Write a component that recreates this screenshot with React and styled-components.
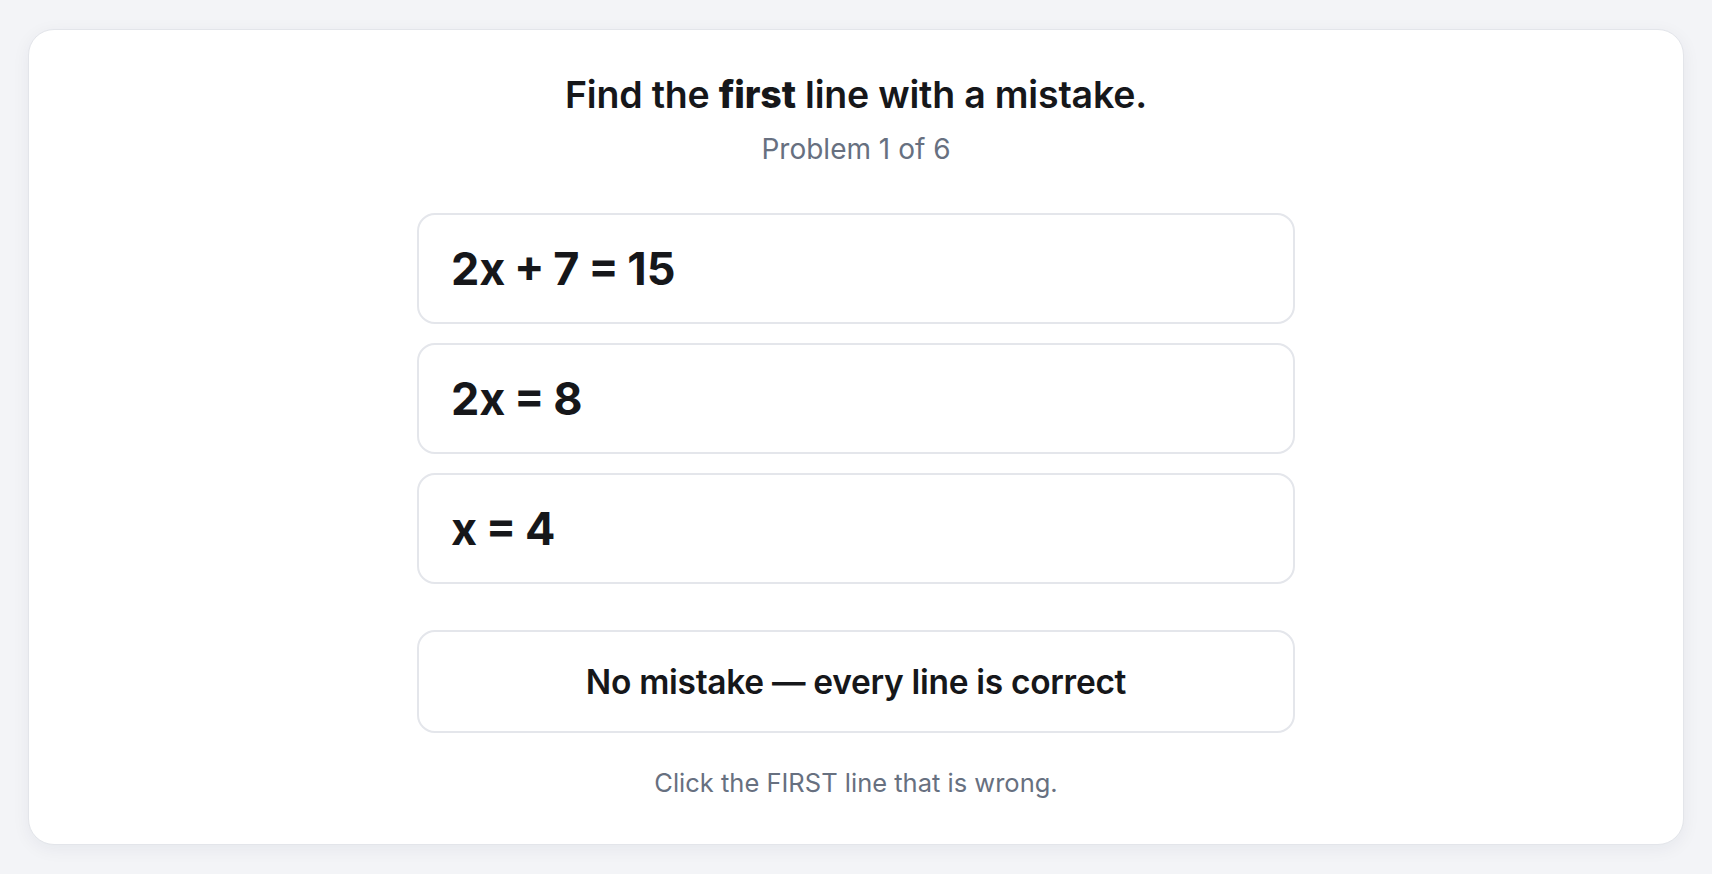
import React from 'react'
import styled, { createGlobalStyle } from 'styled-components'

const lines = ['2x + 7 = 15', '2x = 8', 'x = 4']

const GlobalStyle = createGlobalStyle`
  html, body {
    margin: 0;
    padding: 0;
    background: #f3f4f7;
  }
  body {
    font-family: Inter, "Noto Sans", "Liberation Sans", sans-serif;
    color: #16171a;
    -webkit-font-smoothing: antialiased;
  }
`

const Page = styled.div`
  box-sizing: border-box;
  min-height: 100vh;
  padding: 29px 28px 29px;
  display: flex;
`

const Card = styled.main`
  flex: 1;
  box-sizing: border-box;
  background: #ffffff;
  border: 1px solid #e3e5ea;
  border-radius: 26px;
  box-shadow: 0 4px 18px rgba(20, 30, 60, 0.06);
  padding: 42px 32px 40px;
  display: flex;
  flex-direction: column;
  align-items: center;
`

const Title = styled.h1`
  margin: 0;
  font-size: 37.5px;
  line-height: 1.25;
  font-weight: 600;
  letter-spacing: -0.2px;
  b {
    font-weight: 800;
  }
`

const Subtitle = styled.p`
  margin: 12px 0 0;
  font-size: 28px;
  line-height: 1.3;
  color: #677080;
`

const LineList = styled.div`
  width: 878px;
  margin-top: 46px;
  display: flex;
  flex-direction: column;
  gap: 19px;
`

const LineButton = styled.button`
  box-sizing: border-box;
  width: 100%;
  height: ${p => (p.$wide ? '103px' : '111px')};
  padding: 0 32px;
  background: #ffffff;
  border: 2px solid #e4e6eb;
  border-radius: 18px;
  font-family: inherit;
  color: #16171a;
  cursor: pointer;
  display: flex;
  align-items: center;
  justify-content: ${p => (p.$wide ? 'center' : 'flex-start')};
  font-size: ${p => (p.$wide ? '33.5px' : '45px')};
  font-weight: ${p => (p.$wide ? 600 : 700)};
  letter-spacing: ${p => (p.$wide ? '-0.3px' : '0')};
  word-spacing: ${p => (p.$wide ? '0' : '-2px')};
`

const Spacer = styled.div`
  height: 8px;
`

const Hint = styled.p`
  margin: 35px 0 0;
  font-size: 25.5px;
  line-height: 1.2;
  color: #677080;
`

export default function App() {
  return (
    <>
      <GlobalStyle />
      <Page>
        <Card>
          <Title>
            Find the <b>first</b> line with a mistake.
          </Title>
          <Subtitle>Problem 1 of 6</Subtitle>
          <LineList>
            {lines.map(line => (
              <LineButton key={line}>{line}</LineButton>
            ))}
            <Spacer />
            <LineButton $wide>No mistake — every line is correct</LineButton>
          </LineList>
          <Hint>Click the FIRST line that is wrong.</Hint>
        </Card>
      </Page>
    </>
  )
}
